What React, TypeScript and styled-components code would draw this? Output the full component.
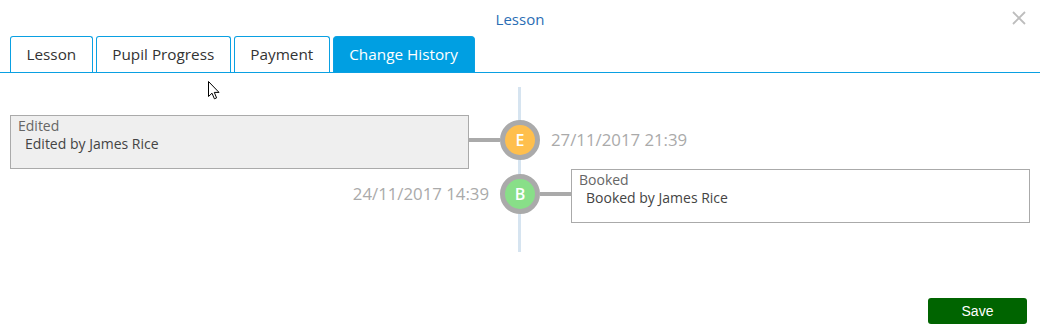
import React from "react";
import styled, { createGlobalStyle } from "styled-components";

const Global = createGlobalStyle`
  html, body { margin: 0; padding: 0; background: #fff; }
  body { font-family: "Open Sans", "Liberation Sans", sans-serif; }
  * { box-sizing: border-box; }
`;

const Dialog = styled.div`
  position: relative;
  width: 1040px;
  height: 336px;
  display: flex;
  flex-direction: column;
  background: #fff;
  overflow: hidden;
`;

const Header = styled.div`
  position: relative;
  height: 36px;
  display: flex;
  align-items: center;
  justify-content: center;
`;

const Title = styled.div`
  font-size: 15px;
  line-height: 20px;
  color: #2a6db4;
  padding-top: 1px;
`;

const CloseButton = styled.button`
  position: absolute;
  right: 14px;
  top: 10px;
  width: 15px;
  height: 15px;
  padding: 0;
  border: 0;
  background: transparent;
  display: flex;
  align-items: center;
  justify-content: center;
  cursor: pointer;
`;

const TabBar = styled.div`
  display: flex;
  align-items: flex-end;
  gap: 3px;
  padding-left: 10px;
  height: 37px;
  border-bottom: 1px solid #0aa0e2;
`;

const Tab = styled.div<{ $active?: boolean }>`
  height: 36px;
  padding: 0 15.5px 1px;
  display: flex;
  align-items: center;
  font-size: 15.3px;
  color: ${(p) => (p.$active ? "#fff" : "#333")};
  background: ${(p) => (p.$active ? "#009fe2" : "#fff")};
  border: 1px solid #0aa0e2;
  border-bottom: none;
  border-radius: ${(p) => (p.$active ? "4px 4px 0 0" : "3px 3px 0 0")};
`;

const Timeline = styled.div`
  position: relative;
  margin-top: 14px;
  padding: 28px 10px 29px;
  display: flex;
  flex-direction: column;

  &::before {
    content: "";
    position: absolute;
    left: 518px;
    top: 0;
    bottom: 0;
    width: 3px;
    background: #d6e4f0;
  }
`;

const Row = styled.div`
  position: relative;
  display: grid;
  grid-template-columns: 1fr 40px 1fr;
  height: 54px;
`;

const Side = styled.div<{ $align: "left" | "right" }>`
  display: flex;
  align-items: flex-start;
  justify-content: ${(p) => (p.$align === "left" ? "flex-end" : "flex-start")};
  min-width: 0;
`;

const Card = styled.div<{ $shaded?: boolean }>`
  flex: 1;
  height: 54px;
  border: 1px solid #aaa;
  background: ${(p) => (p.$shaded ? "#efefef" : "#fff")};
  padding: 1px 8px 0 7px;
`;

const CardTitle = styled.div`
  font-size: 14px;
  line-height: 18px;
  color: #666;
`;

const CardBody = styled.div`
  font-size: 14px;
  line-height: 18px;
  color: #444;
  padding-left: 7px;
`;

const Connector = styled.div`
  width: 31px;
  height: 4px;
  margin-top: 23px;
  background: #aaa;
  flex-shrink: 0;
`;

const DateText = styled.div<{ $align: "left" | "right" }>`
  font-size: 16.8px;
  line-height: 50px;
  color: #aaa;
  ${(p) => (p.$align === "left" ? "margin-right: 11px;" : "margin-left: 11px;")}
`;

const Node = styled.div<{ $color: string }>`
  position: relative;
  z-index: 1;
  width: 40px;
  height: 40px;
  margin-top: 5px;
  border-radius: 50%;
  border: 5px solid #aaa;
  background: ${(p) => p.$color};
  color: #fff;
  font-size: 16px;
  font-weight: 600;
  display: flex;
  align-items: center;
  justify-content: center;
  line-height: 1;
`;

const Footer = styled.div`
  flex: 1;
  display: flex;
  align-items: flex-end;
  justify-content: flex-end;
  padding: 0 13px 12px 0;
`;

const SaveButton = styled.button`
  width: 99px;
  height: 26px;
  border: 0;
  border-radius: 3px;
  background: #006400;
  color: #fff;
  font-family: "Liberation Sans", Arial, sans-serif;
  font-size: 14px;
  cursor: pointer;
`;

const Pointer = styled.svg`
  position: absolute;
  left: 208px;
  top: 81px;
  pointer-events: none;
`;

type Entry = {
  letter: string;
  color: string;
  title: string;
  body: string;
  date: string;
  side: "left" | "right";
  shaded?: boolean;
};

const entries: Entry[] = [
  {
    letter: "E",
    color: "#ffbf4d",
    title: "Edited",
    body: "Edited by James Rice",
    date: "27/11/2017 21:39",
    side: "left",
    shaded: true,
  },
  {
    letter: "B",
    color: "#88df88",
    title: "Booked",
    body: "Booked by James Rice",
    date: "24/11/2017 14:39",
    side: "right",
  },
];

export default function App() {
  const tabs = ["Lesson", "Pupil Progress", "Payment", "Change History"];
  return (
    <>
      <Global />
      <Dialog>
        <Header>
          <Title>Lesson</Title>
          <CloseButton aria-label="Close">
            <svg width="14" height="14" viewBox="0 0 14 14">
              <path d="M1 1 L13 13 M13 1 L1 13" stroke="#bdbdbd" strokeWidth="1.8" fill="none" />
            </svg>
          </CloseButton>
        </Header>
        <TabBar>
          {tabs.map((t) => (
            <Tab key={t} $active={t === "Change History"}>
              {t}
            </Tab>
          ))}
        </TabBar>
        <Timeline>
          {entries.map((e) => {
            const card = (
              <Card $shaded={e.shaded}>
                <CardTitle>{e.title}</CardTitle>
                <CardBody>{e.body}</CardBody>
              </Card>
            );
            return (
              <Row key={e.letter}>
                <Side $align="left">
                  {e.side === "left" ? (
                    <>
                      {card}
                      <Connector />
                    </>
                  ) : (
                    <DateText $align="left">{e.date}</DateText>
                  )}
                </Side>
                <Node $color={e.color}>{e.letter}</Node>
                <Side $align="right">
                  {e.side === "right" ? (
                    <>
                      <Connector />
                      {card}
                    </>
                  ) : (
                    <DateText $align="right">{e.date}</DateText>
                  )}
                </Side>
              </Row>
            );
          })}
        </Timeline>
        <Footer>
          <SaveButton>Save</SaveButton>
        </Footer>
        <Pointer width="12" height="19" viewBox="0 0 12 19">
          <path
            d="M0.5 0.5 L0.5 15.5 L4 12.2 L6.4 17.8 L8.6 16.9 L6.3 11.4 L11 11.4 Z"
            fill="#fff"
            stroke="#000"
            strokeWidth="1"
            strokeLinejoin="miter"
          />
        </Pointer>
      </Dialog>
    </>
  );
}
